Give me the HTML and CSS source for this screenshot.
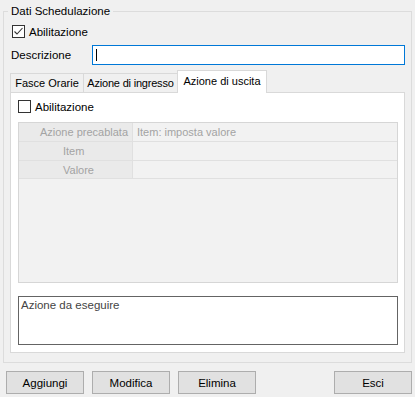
FILE: index.html
```html
<!DOCTYPE html>
<html lang="it">
<head>
  <meta charset="UTF-8">
  <title>Dati Schedulazione</title>
  <link rel="stylesheet" href="styles.css">
</head>
<body>

  <!-- Gruppo principale -->
  <fieldset class="group">
    <legend>Dati Schedulazione</legend>

    <label class="check-row">
      <span class="box"><svg width="11" height="11" viewBox="0 0 11 11"><polyline points="1.5,5.5 4,8 9.5,2" fill="none" stroke="#333" stroke-width="1.1"/></svg></span>
      Abilitazione
    </label>

    <div class="field-row">
      <span class="field-label">Descrizione</span>
      <div class="text-input"><span class="caret"></span></div>
    </div>

    <!-- Tab control -->
    <div class="tabs">
      <div class="tab-strip">
        <div class="tab tab-fasce">Fasce Orarie</div>
        <div class="tab tab-ingresso">Azione di ingresso</div>
        <div class="tab tab-uscita active">Azione di uscita</div>
      </div>

      <div class="tab-panel">
        <label class="check-row panel-check">
          <span class="box"></span>
          Abilitazione
        </label>

        <div class="grid">
          <div class="grid-row">
            <div class="grid-head wide">Azione precablata</div>
            <div class="grid-cell">Item: imposta valore</div>
          </div>
          <div class="grid-row">
            <div class="grid-head">Item</div>
            <div class="grid-cell"></div>
          </div>
          <div class="grid-row last">
            <div class="grid-head">Valore</div>
            <div class="grid-cell"></div>
          </div>
        </div>

        <div class="memo">Azione da eseguire</div>
      </div>
    </div>
  </fieldset>

  <!-- Pulsanti -->
  <div class="buttons">
    <button>Aggiungi</button>
    <button>Modifica</button>
    <button>Elimina</button>
    <button class="btn-exit">Esci</button>
  </div>

</body>
</html>
```

FILE: styles.css
```css
body {
  margin: 0;
  width: 415px;
  height: 397px;
  overflow: hidden;
  background-color: #f0f0f0;
  font-family: "Liberation Sans", Arial, sans-serif;
  font-size: 11.5px;
  color: #000;
}

.group {
  margin: 3px 3px 0;
  padding: 0 0 9px;
  border: 1px solid #dcdcdc;
  min-width: 0;
}

.group legend {
  margin-left: 4px;
  padding: 0 3px;
  line-height: 16px;
}

.check-row {
  display: flex;
  align-items: center;
  height: 15px;
  margin: 5px 0 0 8px;
}

.box {
  display: flex;
  width: 13px;
  height: 13px;
  box-sizing: border-box;
  border: 1px solid #333;
  background: #fff;
  margin-right: 4px;
}

.field-row {
  display: flex;
  align-items: center;
  margin: 6px 0 0 7px;
}

.field-label {
  width: 81px;
}

.text-input {
  display: flex;
  align-items: center;
  width: 313px;
  height: 20px;
  box-sizing: border-box;
  border: 1px solid #0078d7;
  background: #fff;
}

.caret {
  width: 1px;
  height: 12px;
  margin-left: 3px;
  background: #000;
}

/* Tabs */
.tabs {
  margin: 5px 0 0 6px;
  width: 395px;
}

.tab-strip {
  display: flex;
  align-items: flex-end;
  height: 22px;
  font-size: 11px;
}

.tab {
  display: flex;
  align-items: center;
  justify-content: center;
  height: 19px;
  box-sizing: border-box;
  border: 1px solid #d9d9d9;
  border-bottom: none;
  background: #f0f0f0;
  white-space: nowrap;
}

.tab-fasce {
  width: 74px;
}

.tab-ingresso {
  width: 94px;
  border-left: none;
  letter-spacing: -0.2px;
}

.tab-uscita {
  width: 90px;
}

.tab.active {
  position: relative;
  height: 23px;
  margin: 0 0 -1px -1px;
  padding-bottom: 2px;
  background: #fff;
}

.tab-panel {
  border: 1px solid #d9d9d9;
  background: #fff;
  padding: 7px 6px 7px 7px;
}

.panel-check {
  height: 13px;
  margin: 0;
}

/* Griglia proprieta */
.grid {
  margin-top: 9px;
  height: 161px;
  box-sizing: border-box;
  border: 1px solid #d6d6d6;
  background: #f2f2f2;
  font-size: 11px;
  color: #a3a3a3;
}

.grid-row {
  display: flex;
  height: 19px;
  box-sizing: border-box;
  border-bottom: 1px solid #e0e0e0;
}

.grid-row.last {
  height: 18px;
}

.grid-head {
  width: 114px;
  box-sizing: border-box;
  border-right: 1px solid #e0e0e0;
  background: #eaeaea;
  padding-left: 44px;
  line-height: 18px;
  white-space: nowrap;
}

.grid-head.wide {
  padding-left: 0;
  padding-right: 4px;
  text-align: right;
}

.grid-cell {
  flex: 1;
  padding-left: 4px;
  line-height: 18px;
}

.memo {
  margin-top: 13px;
  height: 49px;
  box-sizing: border-box;
  border: 1px solid #646464;
  background: #fff;
  padding: 2px 2px;
  color: #444;
}

/* Pulsanti */
.buttons {
  display: flex;
  gap: 8px;
  margin: 8px 3px 0 6px;
}

.buttons button {
  width: 78px;
  height: 23px;
  border: 1px solid #adadad;
  background-color: #e1e1e1;
  font-family: "Liberation Sans", Arial, sans-serif;
  font-size: 11.5px;
  color: #000;
  padding: 0;
}

.buttons .btn-exit {
  margin-left: auto;
}
```
